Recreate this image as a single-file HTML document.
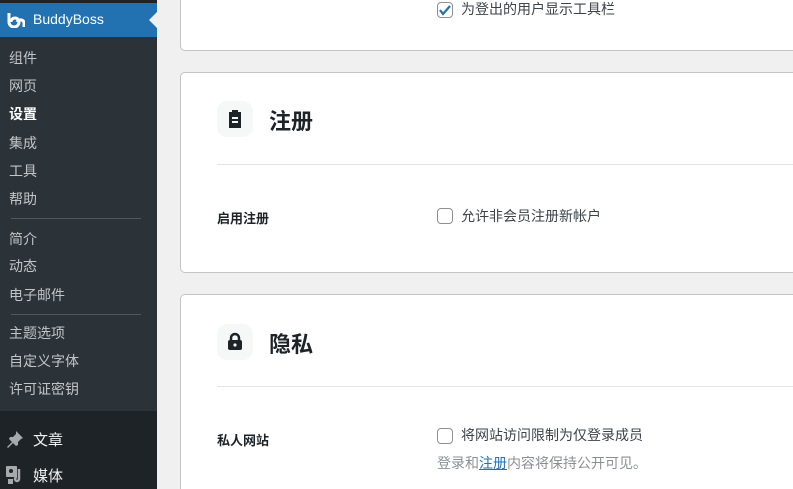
<!DOCTYPE html>
<html><head><meta charset="utf-8"><style>
*{margin:0;padding:0;box-sizing:border-box}
html,body{width:793px;height:489px;overflow:hidden}
body{background:#f0f0f1;font-family:"Liberation Sans","Noto Sans CJK SC",sans-serif;position:relative}
#side{position:absolute;left:0;top:0;width:157px;height:489px;background:#1d2327}
#sub{position:absolute;left:0;top:37px;width:157px;height:374px;background:#2c3338}
.hd{position:absolute;left:0;top:3px;width:157px;height:34px;background:#2271b1;color:#fff;font-size:14px}
.hd span{position:absolute;left:33px;top:8px}
.arrow{position:absolute;right:0;top:9px;width:0;height:0;border:8px solid transparent;border-right-color:#f0f0f1}
.it{position:absolute;left:9px;color:#c3c4c7;font-size:14px;line-height:16px}
.sep{position:absolute;left:11px;width:130px;height:1px;background:#50575e}
.m{position:absolute;left:33px;color:#f0f0f1;font-size:15px}
.card{position:absolute;left:180px;width:630px;background:#fff;border:1px solid #c3c4c7;border-radius:5px;overflow:hidden}
.ib{position:absolute;left:36px;width:36px;height:36px;background:#f6f7f7;border-radius:10px}
.tt{position:absolute;left:88px;font-size:22px;font-weight:bold;color:#1d2327}
.dv{position:absolute;left:36px;right:0;height:1px;background:#e2e4e7}
.lb{position:absolute;left:36px;font-size:13px;font-weight:bold;color:#1d2327}
.cb{position:absolute;left:256px;width:16px;height:16px;border:1px solid #8c8f94;border-radius:4px;background:#fff}
.tx{position:absolute;left:280px;font-size:14px;color:#3c434a}
</style></head><body>
<div id="side">
<div id="sub"></div>
<div class="hd"><svg style="position:absolute;left:6px;top:9px" width="19" height="16" viewBox="0 0 19 16"><path d="M3 1v9a5 5 0 0 0 10 0a4 4 0 0 0-8 0" fill="none" stroke="#fff" stroke-width="3"/><path d="M11 10a4 4 0 0 1 7 0v5" fill="none" stroke="#fff" stroke-width="3"/></svg><span>BuddyBoss</span><div class="arrow"></div></div>
<div class="it" style="top:50px">组件</div>
<div class="it" style="top:78px">网页</div>
<div class="it" style="top:106px;color:#fff;font-weight:bold">设置</div>
<div class="it" style="top:135px">集成</div>
<div class="it" style="top:163px">工具</div>
<div class="it" style="top:191px">帮助</div>
<div class="sep" style="top:218px"></div>
<div class="it" style="top:231px">简介</div>
<div class="it" style="top:258px">动态</div>
<div class="it" style="top:287px">电子邮件</div>
<div class="sep" style="top:314px"></div>
<div class="it" style="top:325px">主题选项</div>
<div class="it" style="top:353px">自定义字体</div>
<div class="it" style="top:381px">许可证密钥</div>
<svg style="position:absolute;left:6px;top:430px" width="18" height="18" viewBox="0 0 18 18"><path d="M10 1l7 7-2 1-3 3 0 3-2 1-3-3-5 5-1-1 5-5-3-3 1-2 3 0 3-3z" fill="#a7aaad"/></svg>
<div class="m" style="top:429px">文章</div>
<svg style="position:absolute;left:6px;top:465px" width="18" height="20" viewBox="0 0 18 20"><rect x="0" y="1" width="11" height="11" rx="1" fill="#a7aaad"/><circle cx="5" cy="6" r="2" fill="#1d2327"/><path d="M13 4v10a2 2 0 1 1-2-2" fill="none" stroke="#a7aaad" stroke-width="2.5"/><rect x="2" y="14" width="5" height="5" fill="#a7aaad"/></svg>
<div class="m" style="top:465px">媒体</div>
</div>

<div class="card" style="top:-100px;height:151px">
<div class="cb" style="top:101px"><svg width="14" height="14" viewBox="0 0 14 14"><path d="M2 7l3 4 7-8" fill="none" stroke="#2271b1" stroke-width="2.2"/></svg></div>
<div class="tx" style="top:98px">为登出的用户显示工具栏</div>
</div>

<div class="card" style="top:72px;height:201px">
<div class="ib" style="top:28px"><svg style="position:absolute;left:10px;top:8px" width="16" height="20" viewBox="0 0 16 20"><path d="M5 1h6v2h3v16H2V3h3z" fill="#1d2327"/><rect x="5" y="8" width="6" height="2" fill="#f6f7f7"/><rect x="5" y="12" width="6" height="2" fill="#f6f7f7"/></svg></div>
<div class="tt" style="top:31px">注册</div>
<div class="dv" style="top:91px"></div>
<div class="lb" style="top:135px">启用注册</div>
<div class="cb" style="top:135px"></div>
<div class="tx" style="top:133px">允许非会员注册新帐户</div>
</div>

<div class="card" style="top:294px;height:195px;border-bottom:none;border-radius:5px 5px 0 0">
<div class="ib" style="top:29px"><svg style="position:absolute;left:10px;top:8px" width="16" height="19" viewBox="0 0 16 19"><path d="M4 8V6a4 4 0 0 1 8 0v2" fill="none" stroke="#1d2327" stroke-width="2.5"/><rect x="1" y="8" width="14" height="10" rx="2" fill="#1d2327"/><circle cx="8" cy="13" r="1.6" fill="#f6f7f7"/></svg></div>
<div class="tt" style="top:32px">隐私</div>
<div class="dv" style="top:91px"></div>
<div class="lb" style="top:135px">私人网站</div>
<div class="cb" style="top:133px"></div>
<div class="tx" style="top:130px">将网站访问限制为仅登录成员</div>
<div class="tx" style="left:256px;top:158px;color:#8c8f94">登录和<span style="color:#2271b1;text-decoration:underline">注册</span>内容将保持公开可见。</div>
</div>
</body></html>
